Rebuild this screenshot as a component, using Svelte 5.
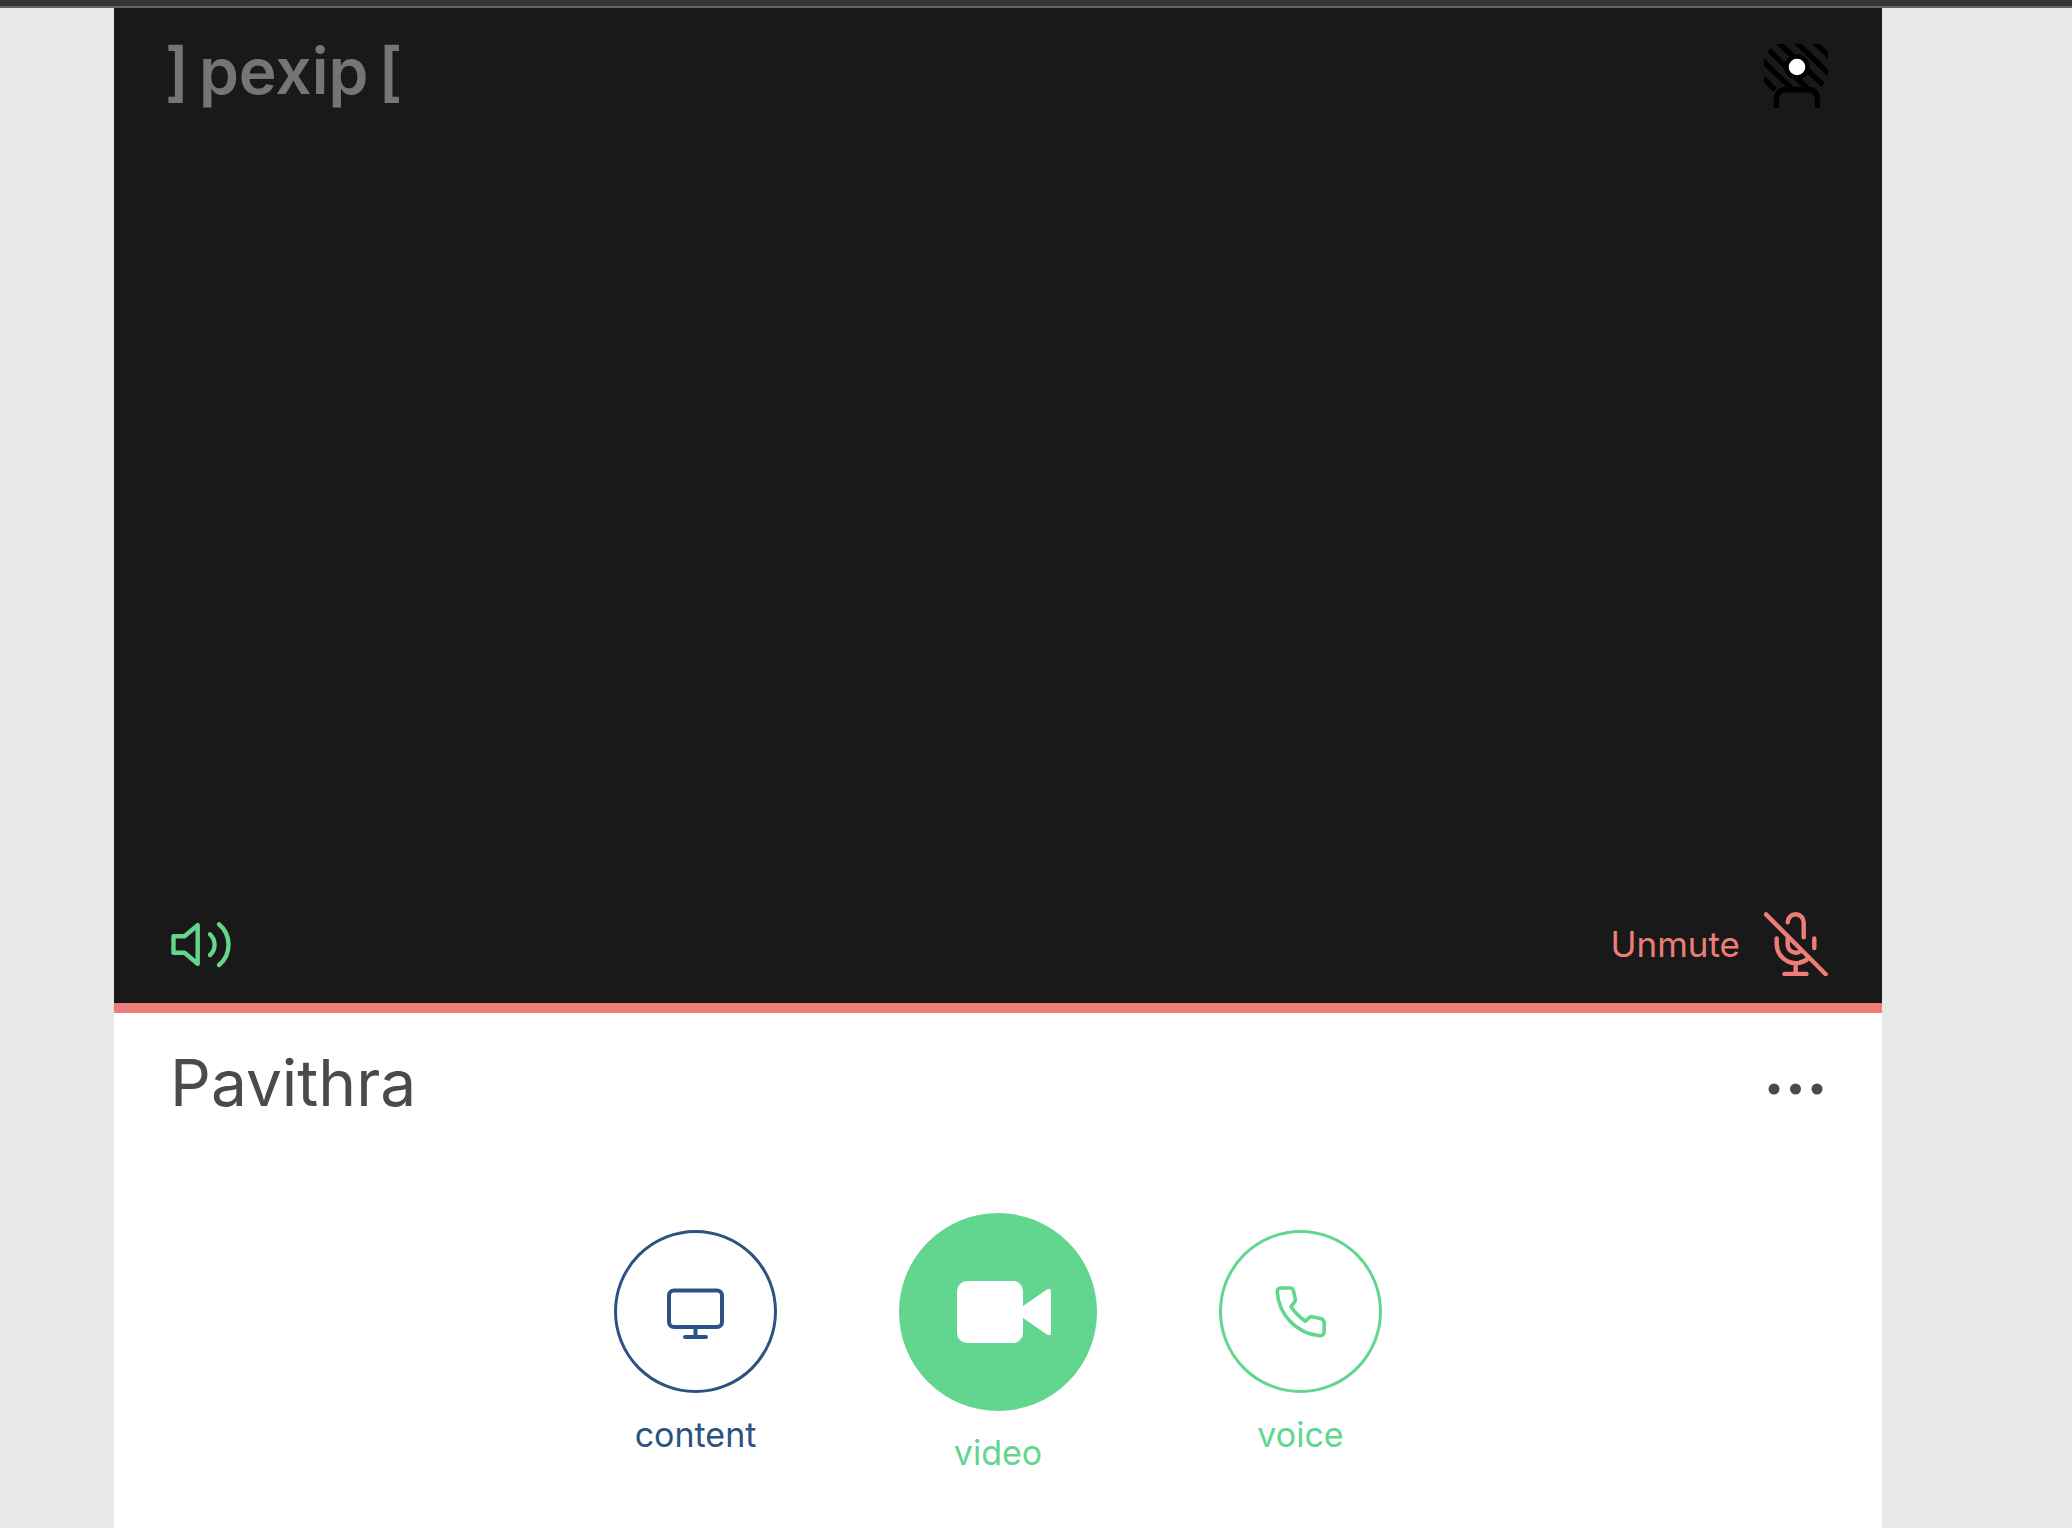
<script>
  let speaker = $state(true);
  let muted = $state(true);
</script>

<div class="page">
  <main class="card">
    <section class="preview" aria-label="Camera preview">
      <header class="row top">
        <div class="logo"><span>]</span><span>pexip</span><span>[</span></div>
        <button class="icon" aria-label="Background effects">
          <svg viewBox="0 0 64 64" fill="none" stroke="#000">
            <path stroke-width="5.4" d="M51 -1 66 13M33 -1 66 31M15 -1 59 41M5 6 44 45M-1 17 27 44M-1 34 11 46" />
            <path fill="#191919" stroke-width="5.4" d="M12.500 64V56q0-10.500 10-10.500h21q10 0 10 10.500v8" />
            <circle cx="33" cy="23" r="10.500" fill="#fff" stroke-width="4.400" />
          </svg>
        </button>
      </header>
      <div class="row bottom">
        <button class="icon green" aria-label="Speaker" aria-pressed={speaker} onclick={() => (speaker = !speaker)}>
          <svg viewBox="18 22 64 64" fill="none" stroke="currentColor" stroke-width="4.4" stroke-linecap="round" stroke-linejoin="round">
            <path d="M23.500 46.200H34.500L47.700 35.200V73.800L34.500 62.800H23.500Z" />
            <path d="M60 44.300A14 14 0 0 1 60 65M69 34.300A26.500 26.500 0 0 1 69 75" />
          </svg>
        </button>
        <button class="mute" aria-pressed={muted} onclick={() => (muted = !muted)}>
          <span>Unmute</span>
          <svg viewBox="174 22 64 64" fill="none" stroke="currentColor" stroke-width="4.4" stroke-linecap="round" stroke-linejoin="round">
            <path d="M176 24.400 235.700 84.300M197.700 32.300a8 8 0 0 1 16 0V47.300M197.700 46.500V54.600a8 8 0 0 0 12.500 6.600M186.700 48.500V54.300a19 19 0 0 0 31.500 14.200M224.300 48.500V58M205.700 73.500V84M194.500 84H216.500" />
          </svg>
        </button>
      </div>
    </section>

    <section class="panel">
      <div class="row person">
        <h1>Pavithra</h1>
        <button class="icon" aria-label="More options">
          <svg viewBox="0 0 64 64" fill="currentColor">
            <circle cx="10" cy="32" r="5.500" /><circle cx="31.500" cy="32" r="5.500" /><circle cx="53" cy="32" r="5.500" />
          </svg>
        </button>
      </div>

      <div class="actions">
        <button class="action blue">
          <span class="disc">
            <svg viewBox="64 81 64 64" fill="none" stroke="currentColor" stroke-width="4" stroke-linecap="round">
              <rect x="69" y="91.500" width="53" height="36.500" rx="5" />
              <path d="M95.500 128V138M85 138H106" />
            </svg>
          </span>
          <span>content</span>
        </button>
        <button class="action green main">
          <span class="disc">
            <svg viewBox="68 63 100 100" fill="#fff">
              <rect x="77" y="82" width="66" height="62" rx="10" />
              <path d="M142 107.700 167.200 90.200Q171 88.600 171 92.500V133.500Q171 137.400 167.200 135.800L142 118.300Z" />
            </svg>
          </span>
          <span>video</span>
        </button>
        <button class="action green">
          <span class="disc">
            <svg viewBox="69 81 64 64" fill="none" stroke="currentColor" stroke-width="3.600" stroke-linejoin="round">
              <path d="M81 89H90Q93 89 93.500 92L95.300 100Q95.600 101.600 94.700 102.800L91 107.700C95 113.500 99.500 118 105.300 122.300L109.300 118.500Q110.500 117.500 112 117.700L120.500 119.500Q124.200 120.500 124.200 124V132.500Q124 137 119.500 136.700C96 134.500 78.500 115 77.300 93Q77 89 81 89Z" />
            </svg>
          </span>
          <span>voice</span>
        </button>
      </div>
    </section>
  </main>
</div>

<style>
  :global(body) {
    margin: 0;
    background: #e8e8e8;
  }
  .page {
    box-sizing: border-box;
    min-height: 100vh;
    display: flex;
    flex-direction: column;
    padding: 0 190px 0 114px;
    font-family: Inter, "Liberation Sans", sans-serif;
    color: #4a4a4a;
  }
  .page::before {
    content: "";
    height: 6px;
    margin: 0 -190px 0 -114px;
    background: #363636;
    border-bottom: 2px solid #676565;
  }
  .card {
    flex: 1;
    display: flex;
    flex-direction: column;
    background: #fff;
  }
  .preview {
    box-sizing: content-box;
    aspect-ratio: 16 / 9;
    display: flex;
    flex-direction: column;
    justify-content: space-between;
    background: #191919;
    border-bottom: 10px solid #ed7d76;
  }
  .row {
    display: flex;
    justify-content: space-between;
    padding: 0 54px;
  }
  .top {
    align-items: flex-end;
    padding-top: 26px;
    padding-left: 51px;
  }
  .bottom {
    align-items: center;
    padding-bottom: 27px;
  }
  .logo {
    display: flex;
    gap: 10px;
    font-size: 64px;
    line-height: 74px;
    font-weight: 600;
    color: #757575;
  }
  button {
    padding: 0;
    border: 0;
    background: none;
    font: inherit;
    color: inherit;
    cursor: pointer;
  }
  svg {
    display: block;
    width: 64px;
    height: 64px;
  }
  .mute {
    display: flex;
    align-items: center;
    gap: 24px;
    font-size: 35px;
    line-height: 38px;
    color: #ed7d76;
  }
  .green {
    color: #62d68f;
  }
  .blue {
    color: #2b5280;
  }
  .panel {
    padding: 32px 0 40px;
  }
  .person {
    align-items: flex-end;
    padding-left: 56px;
  }
  h1 {
    margin: 0;
    font-size: 64px;
    line-height: 76px;
    font-weight: 400;
  }
  .actions {
    display: flex;
    justify-content: center;
    align-items: center;
    gap: 122px;
    margin-top: 92px;
  }
  .action {
    display: flex;
    flex-direction: column;
    align-items: center;
    gap: 22px;
    font-size: 34px;
    line-height: 40px;
  }
  .disc {
    box-sizing: border-box;
    width: 163px;
    height: 163px;
    display: grid;
    place-items: center;
    border: 3px solid currentColor;
    border-radius: 50%;
  }
  .main .disc {
    width: 198px;
    height: 198px;
    background: #62d68f;
  }
  .main svg {
    width: 100px;
    height: 100px;
    overflow: visible;
  }
</style>
